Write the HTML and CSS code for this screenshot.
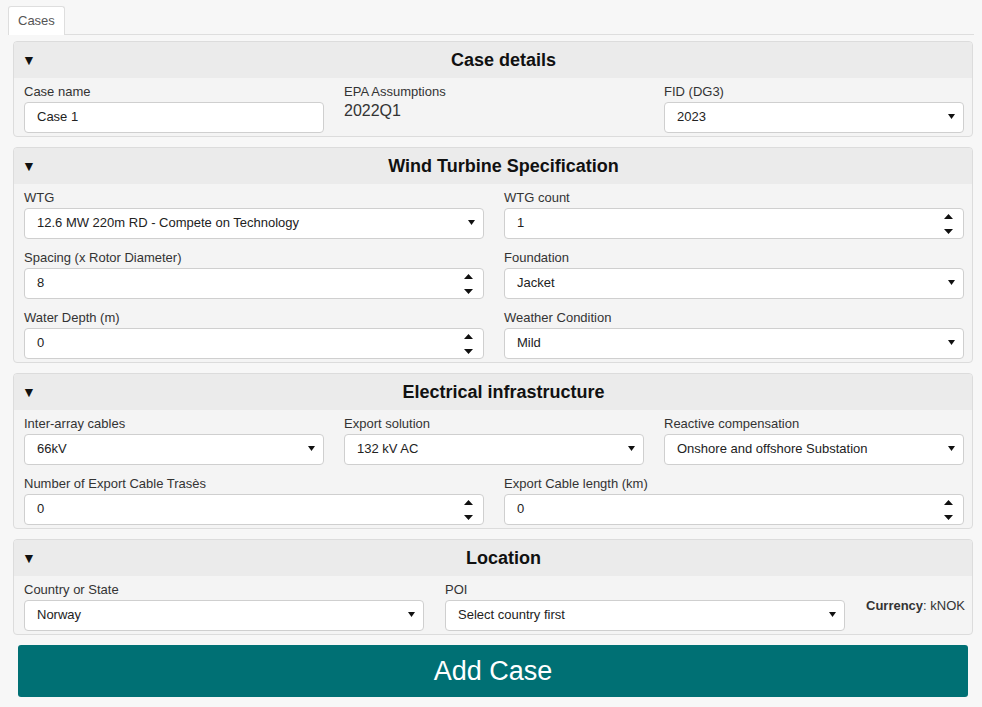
FILE: index.html
```html
<!DOCTYPE html>
<html>
<head>
<meta charset="utf-8">
<link rel="stylesheet" href="styles.css">
</head>
<body>
<div class="tabbar"><div class="tab">Cases</div></div>
<div class="content">

  <section class="panel">
    <div class="panel-head"><span class="caret">&#9660;</span><h2>Case details</h2></div>
    <div class="grid cols3">
      <div class="field"><div class="label">Case name</div><div class="control">Case 1</div></div>
      <div class="field"><div class="label">EPA Assumptions</div><div class="static-value">2022Q1</div></div>
      <div class="field"><div class="label">FID (DG3)</div><div class="control"><span>2023</span><svg class="dd" width="7" height="5" viewBox="0 0 7 5"><path d="M0 0H7L3.5 5Z"/></svg></div></div>
    </div>
  </section>

  <section class="panel">
    <div class="panel-head"><span class="caret">&#9660;</span><h2>Wind Turbine Specification</h2></div>
    <div class="grid cols2">
      <div class="field"><div class="label">WTG</div><div class="control"><span>12.6 MW 220m RD - Compete on Technology</span><svg class="dd" width="7" height="5" viewBox="0 0 7 5"><path d="M0 0H7L3.5 5Z"/></svg></div></div>
      <div class="field"><div class="label">WTG count</div><div class="control num"><span>1</span><svg class="spin" width="9" height="20" viewBox="0 0 9 20"><path d="M0 5L4.5 0L9 5Z M0 15H9L4.5 20Z"/></svg></div></div>
      <div class="field"><div class="label">Spacing (x Rotor Diameter)</div><div class="control num"><span>8</span><svg class="spin" width="9" height="20" viewBox="0 0 9 20"><path d="M0 5L4.5 0L9 5Z M0 15H9L4.5 20Z"/></svg></div></div>
      <div class="field"><div class="label">Foundation</div><div class="control"><span>Jacket</span><svg class="dd" width="7" height="5" viewBox="0 0 7 5"><path d="M0 0H7L3.5 5Z"/></svg></div></div>
      <div class="field"><div class="label">Water Depth (m)</div><div class="control num"><span>0</span><svg class="spin" width="9" height="20" viewBox="0 0 9 20"><path d="M0 5L4.5 0L9 5Z M0 15H9L4.5 20Z"/></svg></div></div>
      <div class="field"><div class="label">Weather Condition</div><div class="control"><span>Mild</span><svg class="dd" width="7" height="5" viewBox="0 0 7 5"><path d="M0 0H7L3.5 5Z"/></svg></div></div>
    </div>
  </section>

  <section class="panel">
    <div class="panel-head"><span class="caret">&#9660;</span><h2>Electrical infrastructure</h2></div>
    <div class="rows">
      <div class="grid cols3">
        <div class="field"><div class="label">Inter-array cables</div><div class="control"><span>66kV</span><svg class="dd" width="7" height="5" viewBox="0 0 7 5"><path d="M0 0H7L3.5 5Z"/></svg></div></div>
        <div class="field"><div class="label">Export solution</div><div class="control"><span>132 kV AC</span><svg class="dd" width="7" height="5" viewBox="0 0 7 5"><path d="M0 0H7L3.5 5Z"/></svg></div></div>
        <div class="field"><div class="label">Reactive compensation</div><div class="control"><span>Onshore and offshore Substation</span><svg class="dd" width="7" height="5" viewBox="0 0 7 5"><path d="M0 0H7L3.5 5Z"/></svg></div></div>
      </div>
      <div class="grid cols2">
        <div class="field"><div class="label">Number of Export Cable Trasès</div><div class="control num"><span>0</span><svg class="spin" width="9" height="20" viewBox="0 0 9 20"><path d="M0 5L4.5 0L9 5Z M0 15H9L4.5 20Z"/></svg></div></div>
        <div class="field"><div class="label">Export Cable length (km)</div><div class="control num"><span>0</span><svg class="spin" width="9" height="20" viewBox="0 0 9 20"><path d="M0 5L4.5 0L9 5Z M0 15H9L4.5 20Z"/></svg></div></div>
      </div>
    </div>
  </section>

  <section class="panel">
    <div class="panel-head"><span class="caret">&#9660;</span><h2>Location</h2></div>
    <div class="grid cols-loc">
      <div class="field"><div class="label">Country or State</div><div class="control"><span>Norway</span><svg class="dd" width="7" height="5" viewBox="0 0 7 5"><path d="M0 0H7L3.5 5Z"/></svg></div></div>
      <div class="field"><div class="label">POI</div><div class="control"><span>Select country first</span><svg class="dd" width="7" height="5" viewBox="0 0 7 5"><path d="M0 0H7L3.5 5Z"/></svg></div></div>
      <div class="currency"><b>Currency</b>: kNOK</div>
    </div>
  </section>

  <button class="add-btn">Add Case</button>
</div>
</body>
</html>
```
FILE: styles.css
```css
* { box-sizing: border-box; }
html, body { background: #f7f7f7; }
body {
  margin: 0;
  padding: 6px 8px 0 8px;
  font-family: "Liberation Sans", Arial, sans-serif;
  font-size: 13px;
  color: #333;
}
.tabbar {
  display: flex;
  border-bottom: 1px solid #dedede;
}
.tab {
  background: #fff;
  border: 1px solid #dedede;
  border-bottom: none;
  border-radius: 3px 3px 0 0;
  padding: 5px 9px;
  line-height: 18px;
  color: #555;
  margin-bottom: -1px;
}
.content {
  padding: 6px 1px 0 5px;
}
.panel {
  border: 1px solid #dcdcdc;
  border-radius: 4px;
  background: #f4f4f4;
  margin-bottom: 10px;
}
.panel-head {
  display: flex;
  align-items: center;
  height: 36px;
  background: #ebebeb;
  border-radius: 3px 3px 0 0;
}
.caret {
  width: 21px;
  padding-left: 8px;
  font-size: 14px;
  color: #111;
}
.panel-head h2 {
  flex: 1;
  margin: 0;
  text-align: center;
  font-size: 18px;
  font-weight: bold;
  color: #111;
}
.grid {
  display: grid;
  column-gap: 20px;
  row-gap: 11px;
  padding: 6px 8px 3px 10px;
}
.cols3 { grid-template-columns: repeat(3, 1fr); }
.cols2 { grid-template-columns: repeat(2, 1fr); }
.cols-loc { grid-template-columns: 400px 400px 1fr; column-gap: 21px; }
.rows { display: flex; flex-direction: column; }
.rows .grid + .grid { padding-top: 11px; }
.rows .grid:first-child { padding-bottom: 0; }
.label {
  line-height: 16px;
  margin-bottom: 2px;
  color: #333;
}
.control {
  height: 31px;
  background: #fff;
  border: 1px solid #cfcfcf;
  border-radius: 4px;
  padding: 0 8px 2px 12px;
  display: flex;
  align-items: center;
  justify-content: space-between;
  color: #222;
}
.control.num { padding-right: 10px; }
.dd, .spin { fill: #111; flex: none; }
.dd { margin-top: 0; }
.spin { margin-top: 2px; }
.static-value {
  font-size: 16px;
  color: #333;
  line-height: 18px;
}
.currency {
  text-align: right;
  padding-top: 16px;
  color: #333;
  white-space: nowrap;
}
.currency b { color: #333; }
.add-btn {
  display: block;
  width: 950px;
  height: 52px;
  margin: 0 5px;
  border: none;
  border-radius: 3px;
  background: #007074;
  color: #fff;
  font-family: "Liberation Sans", Arial, sans-serif;
  font-size: 27px;
}
```
